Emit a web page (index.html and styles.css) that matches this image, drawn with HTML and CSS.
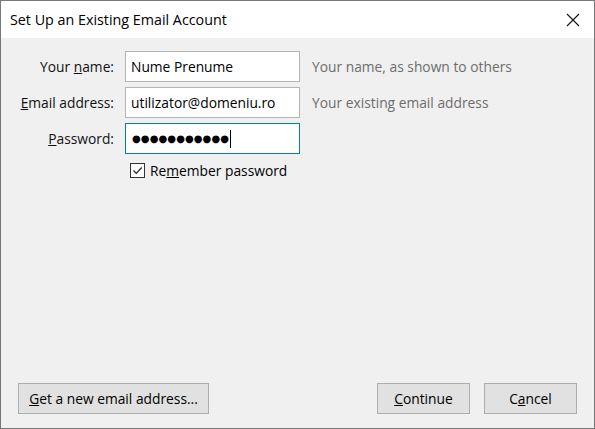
FILE: index.html
```html
<!DOCTYPE html>
<html lang="en">
<head>
    <meta charset="UTF-8">
    <meta name="viewport" content="width=device-width, initial-scale=1.0">
    <title>Set Up an Existing Email Account</title>
    <link rel="stylesheet" href="styles.css">
</head>
<body>

    <div class="window">
        <div class="titlebar">
            <span class="title">Set Up an Existing Email Account</span>
            <span class="close">
                <svg width="14" height="14" viewBox="0 0 14 14">
                    <path d="M1 1 L13 13 M13 1 L1 13" stroke="#111" stroke-width="1.1" fill="none"/>
                </svg>
            </span>
        </div>

        <div class="content">
            <div class="form-grid">
                <label class="label">Your <u>n</u>ame:</label>
                <div class="field">Nume Prenume</div>
                <span class="hint">Your name, as shown to others</span>

                <label class="label"><u>E</u>mail address:</label>
                <div class="field">utilizator@domeniu.ro</div>
                <span class="hint">Your existing email address</span>

                <label class="label"><u>P</u>assword:</label>
                <div class="field focused"><span class="dots">●●●●●●●●●●●</span><span class="caret"></span></div>
                <span class="hint"></span>

                <span></span>
                <div class="remember">
                    <span class="checkbox">
                        <svg width="13" height="13" viewBox="0 0 13 13">
                            <path d="M2.5 6.5 L5.3 9.3 L10.7 3.5" stroke="#222" stroke-width="1.2" fill="none"/>
                        </svg>
                    </span>
                    <span>Re<u>m</u>ember password</span>
                </div>
            </div>

            <div class="buttons">
                <button class="btn wide"><u>G</u>et a new email address...</button>
                <div class="right">
                    <button class="btn"><u>C</u>ontinue</button>
                    <button class="btn">C<u>a</u>ncel</button>
                </div>
            </div>
        </div>
    </div>

</body>
</html>
```

FILE: styles.css
```css
* {
    box-sizing: border-box;
}
html, body {
    margin: 0;
    height: 100%;
}
body {
    font-family: "Open Sans", "Noto Sans", sans-serif;
    font-size: 13.8px;
    color: #000;
}
.window {
    height: 100vh;
    display: flex;
    flex-direction: column;
    border: 1px solid #777;
    background-color: #f0f0f0;
}
.titlebar {
    height: 37px;
    flex-shrink: 0;
    background-color: #fff;
    display: flex;
    align-items: center;
    justify-content: space-between;
    padding: 0 14px 0 9px;
}
.title {
    font-size: 14.3px;
}
.close {
    display: flex;
}
.content {
    flex: 1;
    display: flex;
    flex-direction: column;
    justify-content: space-between;
    padding: 13px 17px 14px 17px;
}
.form-grid {
    display: grid;
    grid-template-columns: 97px 175px auto;
    column-gap: 10px;
    row-gap: 5px;
    align-items: center;
}
.label {
    text-align: right;
    color: #111;
    padding-right: 1px;
}
.field {
    height: 31px;
    border: 1px solid #b4b4b4;
    background-color: #fff;
    padding: 0 5px;
    display: flex;
    align-items: center;
}
.field.focused {
    border-color: #0078d7;
}
.dots {
    font-family: "DejaVu Sans", sans-serif;
    font-size: 10px;
    letter-spacing: 0.1px;
    padding-left: 1px;
}
.caret {
    width: 1px;
    height: 18px;
    background-color: #000;
    margin-left: 1px;
}
.hint {
    color: #6d6d6d;
    margin-left: 2px;
}
.remember {
    display: flex;
    align-items: center;
    gap: 5px;
    margin-top: 2px;
    padding-left: 5px;
}
.checkbox {
    width: 15px;
    height: 15px;
    border: 1px solid #333;
    background-color: #fff;
    display: flex;
    align-items: center;
    justify-content: center;
}
.buttons {
    display: flex;
    justify-content: space-between;
}
.right {
    display: flex;
    gap: 14px;
}
.btn {
    font-family: inherit;
    font-size: 13.8px;
    height: 31px;
    width: 93px;
    padding: 0 6px;
    background-color: #e1e1e1;
    border: 1px solid #adadad;
    color: #000;
}
.btn.wide {
    width: 191px;
}
```
